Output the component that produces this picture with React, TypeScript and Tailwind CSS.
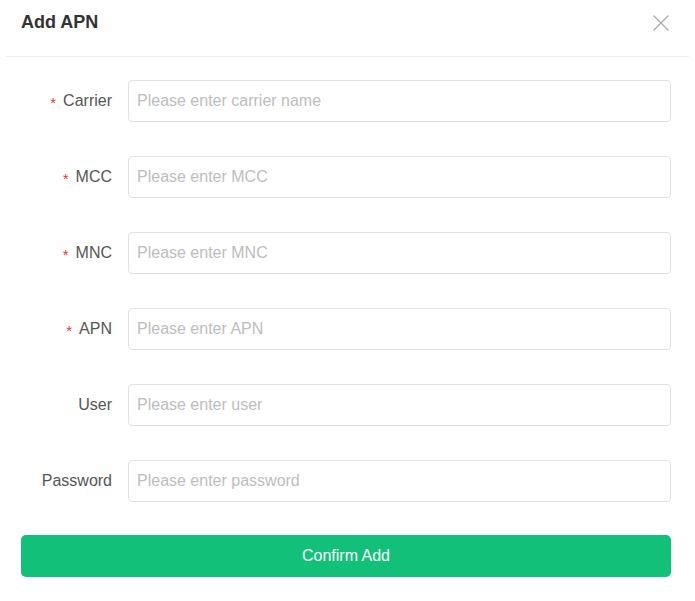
const FIELDS = [
  { label: 'Carrier', placeholder: 'Please enter carrier name', required: true },
  { label: 'MCC', placeholder: 'Please enter MCC', required: true },
  { label: 'MNC', placeholder: 'Please enter MNC', required: true },
  { label: 'APN', placeholder: 'Please enter APN', required: true },
  { label: 'User', placeholder: 'Please enter user', required: false },
  { label: 'Password', placeholder: 'Please enter password', required: false },
]

export default function App() {
  return (
    <div className="min-h-[601px] w-[695px] bg-white font-['Liberation_Sans',Arial,sans-serif] text-[#333]">
      <div className="mx-[6px] flex h-[57px] items-start justify-between border-b border-[#eeeeee] pl-[15px] pr-[20px] pt-[12px]">
        <h2 className="text-[18px] font-bold leading-[21px] text-[#333]">Add APN</h2>
        <button type="button" className="mt-[3px] text-[#a8a8a8]">
          <svg width="16" height="16" viewBox="0 0 16 16" fill="none" stroke="currentColor" strokeWidth="1.2" strokeLinecap="round">
            <path d="M1 1L15 15M15 1L1 15" />
          </svg>
        </button>
      </div>

      <form className="flex flex-col pl-[21px] pr-[24px] pt-[23px]" onSubmit={e => e.preventDefault()}>
        <div className="flex flex-col gap-[34px]">
          {FIELDS.map(field => (
            <div key={field.label} className="flex items-center gap-[16px]">
              <label className="flex w-[91px] shrink-0 items-center justify-end text-[16px] leading-[20px] text-[#555]">
                {field.required ? (
                  <span className="mr-[7px] mt-[3px] text-[15px] leading-none text-[#e23b30]">*</span>
                ) : null}
                {field.label}
              </label>
              <input
                type={field.label === 'Password' ? 'password' : 'text'}
                placeholder={field.placeholder}
                className="h-[42px] flex-1 rounded-[4px] border border-[#e2e2e2] bg-white px-[8px] text-[16px] text-[#333] outline-none placeholder:text-[#bdbdbd]"
              />
            </div>
          ))}
        </div>

        <button
          type="submit"
          className="mt-[33px] h-[42px] w-full rounded-[5px] bg-[#12c07a] text-[16px] text-white"
        >
          Confirm Add
        </button>
      </form>
    </div>
  )
}
